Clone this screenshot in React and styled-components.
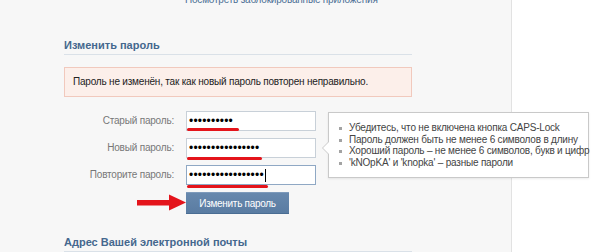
import React from "react";
import styled, { createGlobalStyle } from "styled-components";

const GlobalStyle = createGlobalStyle`
  html, body { margin: 0; padding: 0; }
  body {
    width: 600px;
    height: 252px;
    overflow: hidden;
    background: #fff;
    font-family: "Liberation Sans", Arial, sans-serif;
    font-size: 10px;
    letter-spacing: -0.2px;
    color: #333;
  }
`;

const Page = styled.div`
  display: flex;
  width: 600px;
  height: 252px;
  overflow: hidden;
`;

const Main = styled.div`
  flex: none;
  width: 512px;
  box-sizing: border-box;
  padding-left: 64px;
  background: #f7f7f7;
  border-right: 1px solid #e2e2e2;
`;

const Side = styled.div`
  flex: 1;
  background: #fff;
`;

const Content = styled.div`
  width: 348px;
  display: flex;
  flex-direction: column;
`;

const TopLink = styled.a`
  display: block;
  margin: -6px 0 0 121px;
  line-height: 12px;
  color: #4c6f95;
  text-decoration: none;
`;

const Heading = styled.h2`
  margin: ${(p) => p.$top}px 0 0;
  padding: 0 0 2px;
  font-size: 11px;
  line-height: 14px;
  font-weight: bold;
  letter-spacing: 0;
  color: #45688e;
  border-bottom: 1px solid #dae1e8;
`;

const ErrorBox = styled.div`
  margin-top: 12px;
  padding: 8px;
  line-height: 12px;
  background: #fcefea;
  border: 1px solid #f1c9bd;
  color: #222;
`;

const Form = styled.div`
  position: relative;
  margin-top: 14px;
  display: grid;
  grid-template-columns: 110px 130px;
  column-gap: 12px;
  row-gap: 7px;
  align-items: center;
`;

const Label = styled.label`
  text-align: right;
  color: #777;
  line-height: 12px;
`;

const FieldWrap = styled.div`
  position: relative;
  height: 20px;
`;

const Field = styled.div`
  box-sizing: border-box;
  height: 20px;
  padding: 0 2px;
  background: #fff;
  border: 1px solid ${(p) => (p.$focused ? "#8fa8c4" : "#c8d0d8")};
  display: flex;
  align-items: center;
  font-size: 12px;
  line-height: 18px;
  color: #000;
  letter-spacing: 0.2px;
`;

const Caret = styled.span`
  display: inline-block;
  width: 1px;
  height: 13px;
  margin-left: 1px;
  background: #000;
`;

const Mark = styled.div`
  position: absolute;
  left: 1px;
  height: 3px;
  border-radius: 2px;
  background: #e4141b;
`;

const ArrowCell = styled.div`
  justify-self: end;
  margin-right: -12px;
  display: flex;
`;

const Button = styled.button`
  justify-self: start;
  width: 103px;
  height: 21px;
  padding: 0;
  border: 0;
  border-top: 1px solid #7d9abb;
  box-shadow: 0 1px 0 #4a6d93;
  background: linear-gradient(#6788ad, #5a7ca2);
  color: #fff;
  font-family: "Liberation Sans", Arial, sans-serif;
  font-size: 10px;
  letter-spacing: -0.3px;
  cursor: pointer;
`;

const Tooltip = styled.div`
  position: absolute;
  left: 264px;
  top: 1px;
  width: 261px;
  height: 66px;
  box-sizing: border-box;
  background: #fff;
  border: 1px solid #c9c9c9;
  box-shadow: 0 1px 2px rgba(0, 0, 0, 0.08);
  padding: 9px 0 0 10px;

  &::before,
  &::after {
    content: "";
    position: absolute;
    top: 28px;
    width: 0;
    height: 0;
    border-style: solid;
  }
  &::before {
    left: -7px;
    border-width: 7px 7px 7px 0;
    border-color: transparent #c9c9c9 transparent transparent;
  }
  &::after {
    left: -6px;
    border-width: 7px 7px 7px 0;
    border-color: transparent #fff transparent transparent;
  }
`;

const TipList = styled.ul`
  margin: 0;
  padding: 0;
  list-style: none;
  white-space: nowrap;
`;

const TipItem = styled.li`
  position: relative;
  padding-left: 10px;
  line-height: 11.7px;
  color: #444;

  &::before {
    content: "";
    position: absolute;
    left: 0;
    top: 5px;
    width: 3px;
    height: 3px;
    background: #a3a3a3;
  }
`;

const RedArrow = () => (
  <svg width="49" height="17" viewBox="0 0 49 17">
    <rect x="0" y="6" width="34" height="5.5" fill="#e4141b" />
    <polygon points="32,0.5 49,8.5 32,16.5" fill="#e4141b" />
  </svg>
);

const rows = [
  { label: "Старый пароль:", dots: 10, mark: { top: 17, width: 52 } },
  { label: "Новый пароль:", dots: 16, mark: { top: 19, width: 75 } },
  { label: "Повторите пароль:", dots: 17, mark: { top: 20, width: 81 }, focused: true },
];

const tips = [
  "Убедитесь, что не включена кнопка CAPS-Lock",
  "Пароль должен быть не менее 6 символов в длину",
  "Хороший пароль – не менее 6 символов, букв и цифр",
  "'kNOpKA' и 'knopka' – разные пароли",
];

export default function App() {
  return (
    <>
      <GlobalStyle />
      <Page>
        <Main>
          <Content>
            <TopLink href="#">Посмотреть заблокированные приложения</TopLink>
            <Heading $top={32}>Изменить пароль</Heading>
            <ErrorBox>Пароль не изменён, так как новый пароль повторен неправильно.</ErrorBox>
            <Form>
              {rows.map((r) => (
                <React.Fragment key={r.label}>
                  <Label>{r.label}</Label>
                  <FieldWrap>
                    <Field $focused={r.focused}>
                      {"•".repeat(r.dots)}
                      {r.focused && <Caret />}
                    </Field>
                    <Mark style={{ top: r.mark.top, width: r.mark.width }} />
                  </FieldWrap>
                </React.Fragment>
              ))}
              <ArrowCell>
                <RedArrow />
              </ArrowCell>
              <Button>Изменить пароль</Button>
              <Tooltip>
                <TipList>
                  {tips.map((t) => (
                    <TipItem key={t}>{t}</TipItem>
                  ))}
                </TipList>
              </Tooltip>
            </Form>
            <Heading $top={22}>Адрес Вашей электронной почты</Heading>
          </Content>
        </Main>
        <Side />
      </Page>
    </>
  );
}
